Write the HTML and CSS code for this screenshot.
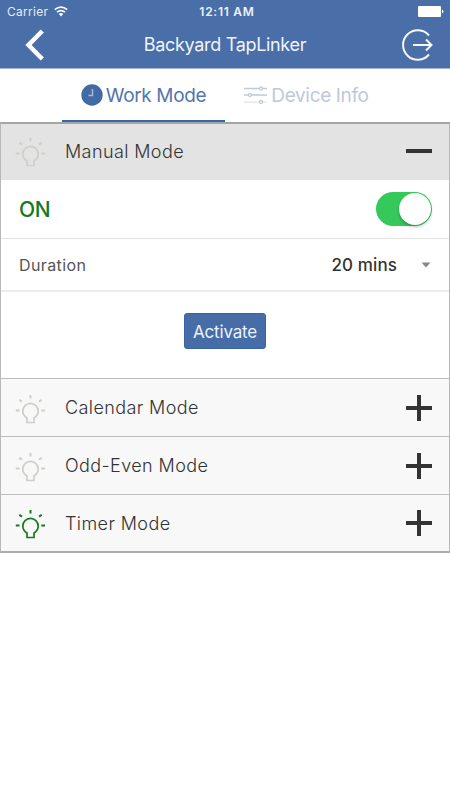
FILE: index.html
```html
<!DOCTYPE html>
<html lang="en">
<head>
<meta charset="utf-8">
<title>Backyard TapLinker</title>
<link rel="stylesheet" href="styles.css">
</head>
<body>
<svg width="0" height="0" class="defs">
  <symbol id="bulb" viewBox="0 0 30 32">
    <path d="M12 30.500V26C9.500 24.500 7.800 22 7.800 19a7.700 7.700 0 0 1 15.400 0c0 3-1.700 5.500-4.200 7v4.500z" fill="none" stroke="currentColor" stroke-width="1.700"/>
    <path d="M15.500 3v3.500M.8 18.500h3.700M26.300 18.500h3.700M4.300 7.800l2.700 1.800M26.700 7.800l-2.700 1.800" fill="none" stroke="currentColor" stroke-width="2"/>
  </symbol>
</svg>
<header class="header">
  <div class="status">
    <div class="carrier"><span>Carrier</span>
      <svg width="14" height="11" viewBox="0 0 14 11" fill="none" stroke="#fff" stroke-width="1.700"><path d="M.8 3.600Q7-1.200 13.200 3.600M3 6.200Q7 3 11 6.200"/><path d="M4.800 7.900Q7 6.300 9.200 7.900L7 10.600z" fill="#fff" stroke="none"/></svg>
    </div>
    <span class="time">12:11 AM</span>
    <svg class="battery" width="26" height="12" viewBox="0 0 26 12" fill="#fff"><rect width="23" height="11" rx="1"/><path d="M24 3.500q3 2 0 4z"/></svg>
  </div>
  <div class="nav">
    <svg width="20" height="32" viewBox="0 0 20 32"><path d="M17.300 2 3.500 16l13.800 14" fill="none" stroke="#fff" stroke-width="4.500"/></svg>
    <h1>Backyard TapLinker</h1>
    <svg width="32" height="32" viewBox="0 0 32 32" fill="none" stroke="#f4f7fc" stroke-width="2"><path d="M28 6.500A14.700 14.700 0 1 0 28 25.500M12 16h18M25 10.500l5.500 5.500-5.500 5.500"/></svg>
  </div>
</header>
<nav class="tabs">
  <div class="tab active">
    <svg width="22" height="22" viewBox="0 0 22 22"><circle cx="11" cy="11" r="10.700" fill="#426ba5"/><path d="M11.500 5v6.500H7.500" fill="none" stroke="#a9bddb" stroke-width="1.400"/></svg>
    <span>Work Mode</span>
  </div>
  <div class="tab">
    <svg width="24" height="18" viewBox="0 0 24 18" fill="#fff" stroke="#c0cadd" stroke-width="1.300"><path d="M0 2.500h23M0 9h23"/><path d="M0 16h23" opacity=".5"/><circle cx="17" cy="2.500" r="1.500"/><circle cx="6" cy="9" r="1.500"/><circle cx="17" cy="16" r="1.500"/></svg>
    <span>Device Info</span>
  </div>
</nav>
<main class="modes">
  <div class="mode open">
    <svg class="bulb"><use href="#bulb"/></svg><span>Manual Mode</span>
    <svg class="sign" viewBox="0 0 26 26"><path d="M0 13h26"/></svg>
  </div>
  <div class="row power"><span class="on">ON</span><div class="switch"><div class="knob"></div></div></div>
  <div class="row duration"><span class="label">Duration</span><span class="value">20 mins</span>
    <svg width="10" height="6" viewBox="0 0 10 6"><path d="M.5.5h9L5 5.500z" fill="#888"/></svg>
  </div>
  <div class="action"><button>Activate</button></div>
  <div class="mode">
    <svg class="bulb"><use href="#bulb"/></svg><span>Calendar Mode</span>
    <svg class="sign" viewBox="0 0 26 26"><path d="M0 13h26M13 0v26"/></svg>
  </div>
  <div class="mode">
    <svg class="bulb"><use href="#bulb"/></svg><span>Odd-Even Mode</span>
    <svg class="sign" viewBox="0 0 26 26"><path d="M0 13h26M13 0v26"/></svg>
  </div>
  <div class="mode">
    <svg class="bulb lit"><use href="#bulb"/></svg><span>Timer Mode</span>
    <svg class="sign" viewBox="0 0 26 26"><path d="M0 13h26M13 0v26"/></svg>
  </div>
</main>
</body>
</html>
```
FILE: styles.css
```css
* { box-sizing: border-box; }
body { margin: 0; background: #fff; font-family: Inter, "Liberation Sans", sans-serif; color: #333; }
svg { display: block; flex: none; overflow: visible; }
span { white-space: nowrap; }
.defs { position: absolute; }
.header { height: 69px; background: #4a6ea8; color: #fff; border-bottom: 1px solid #a3b5d6; }
.status { height: 23px; display: grid; grid-template-columns: 1fr auto 1fr; align-items: center; padding: 0 6px 0 7px; font-size: 12px; }
.carrier { display: flex; align-items: center; gap: 6px; color: #e4ebf6; letter-spacing: .3px; }
.time { margin-left: 3px; font-weight: 600; letter-spacing: .75px; color: #edf2fa; }
.battery { justify-self: end; }
.nav { height: 45px; display: flex; align-items: center; justify-content: space-between; padding: 0 17px 2px 25px; }
.nav h1 { margin: 0 0 0 4px; font-size: 18px; font-weight: 400; letter-spacing: -.32px; color: #f0f4fb; }
.tabs { height: 53px; display: flex; padding-left: 62px; }
.tab { width: 163px; display: flex; align-items: center; justify-content: center; gap: 3px; font-size: 19px; letter-spacing: -.35px; color: #bec8dc; border-bottom: 2px solid transparent; }
.tab span { padding-top: 1px; }
.tab.active { color: #5575ab; border-color: #3766a4; }
.modes { border: 1px solid #b8b8b8; border-top: 2px solid #a5a5a5; border-bottom: 2px solid #aaa; }
.mode { height: 58px; display: flex; align-items: center; padding: 0 17px 0 14px; background: #f8f8f8; border-top: 1px solid #bdbdbd; font-size: 18px; letter-spacing: .4px; font-weight: 350; }
.mode:last-child { height: 57px; }
.mode.open { height: 56px; padding-bottom: 2px; background: #e3e3e3; border: 0; }
.bulb { width: 30px; height: 32px; color: #d0cec9; margin-right: 20px; }
.bulb.lit { color: #16791e; }
.sign { width: 26px; height: 26px; margin-left: auto; stroke: #333; stroke-width: 4; fill: none; }
.row { display: flex; align-items: center; border-bottom: 1px solid #e4e4e4; padding-left: 18px; }
.power { height: 59px; padding-right: 17px; justify-content: space-between; }
.on { font-size: 21px; font-weight: 500; letter-spacing: -.4px; color: #16791e; }
.switch { width: 56px; height: 34px; border-radius: 17px; background: #35c95b; display: flex; justify-content: flex-end; padding: 1px; }
.knob { width: 32px; height: 32px; border-radius: 50%; background: #fff; box-shadow: 0 2px 3px rgba(0,0,0,.25); }
.duration { height: 53px; padding-right: 18px; border-bottom: 2px solid #ececec; }
.duration span { padding-top: 1px; }
.label { font-size: 16px; letter-spacing: .4px; color: #555; }
.value { margin-left: auto; margin-right: 24px; font-size: 17px; font-weight: 500; letter-spacing: .1px; }
.action { height: 86px; display: flex; justify-content: center; padding-top: 21px; }
button { width: 82px; height: 36px; padding: 1px 0 0; border: 1px solid #3864a2; border-radius: 3px; background: #466da8; color: #edf2fa; font: 400 17px Inter, sans-serif; letter-spacing: -.2px; }
```
